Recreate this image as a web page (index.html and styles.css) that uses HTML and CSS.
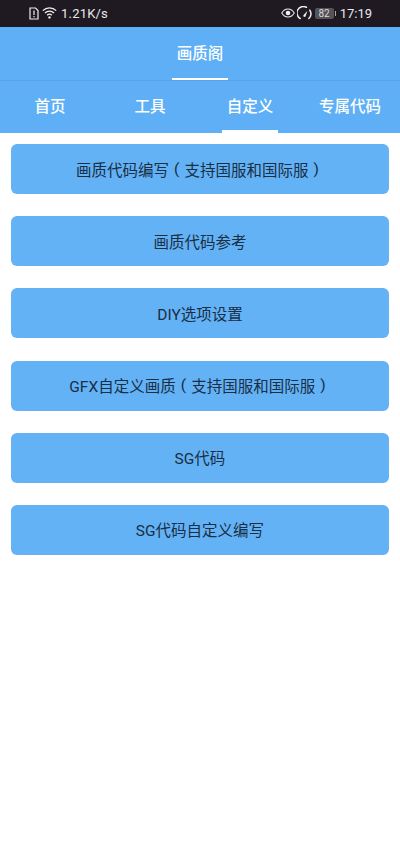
FILE: index.html
```html
<!DOCTYPE html>
<html lang="zh">

<head>
  <meta charset="UTF-8">
  <meta name="viewport" content="width=device-width, initial-scale=1.0">
  <title>画质阁</title>
  <link rel="stylesheet" href="styles.css">
</head>

<body>
  <div class="status-bar">
    <div class="status-left">
      <svg class="sim-icon" width="10" height="13" viewBox="0 0 10 13">
        <path d="M1 1h5.500L9 3.500V12H1z" fill="none" stroke="#eee" stroke-width="1.200" />
        <path d="M4.400 3.500h1.200v4.500H4.400zM4.400 9h1.200v1.300H4.400z" fill="#eee" />
      </svg>
      <svg class="wifi-icon" width="15" height="12" viewBox="0 0 15 12">
        <g fill="none" stroke="#eee" stroke-width="1.300">
          <path d="M.8 3.600a9.500 9.500 0 0 1 13.400 0" />
          <path d="M3 6a6.400 6.400 0 0 1 9 0" />
          <path d="M5.200 8.200a3.200 3.200 0 0 1 4.600 0" />
        </g>
        <circle cx="7.500" cy="10.400" r="1.200" fill="#eee" />
      </svg>
      <span class="net-speed">1.21K/s</span>
    </div>
    <div class="status-right">
      <svg class="eye-icon" width="14" height="10" viewBox="0 0 14 10">
        <path d="M.8 5C2.300 2.300 4.400 1 7 1s4.700 1.300 6.200 4C11.700 7.700 9.600 9 7 9S2.300 7.700.8 5z" fill="none" stroke="#eee" stroke-width="1.100" />
        <circle cx="7" cy="5" r="2.300" fill="#eee" />
      </svg>
      <svg class="gauge-icon" width="15" height="14" viewBox="0 0 15 14">
        <path d="M3.200 12.500A6.200 6.200 0 0 1 9.500 1.300M12.800 4.200a6.200 6.200 0 0 1-1 8.300" fill="none" stroke="#eee" stroke-width="1.500" stroke-linecap="round" />
        <path d="M6.400 9.200l4-4.500-1.800 5.500a1.200 1.200 0 0 1-2.200-1z" fill="#eee" />
      </svg>
      <div class="battery">
        <span class="battery-level">82</span>
        <span class="battery-tip"></span>
      </div>
      <span class="clock">17:19</span>
    </div>
  </div>

  <header class="app-header">
    <div class="app-title">画质阁</div>
  </header>

  <nav class="tabs">
    <div class="tab">首页</div>
    <div class="tab">工具</div>
    <div class="tab tab-active">自定义</div>
    <div class="tab">专属代码</div>
  </nav>

  <main class="menu-list">
    <div class="menu-card">画质代码编写<span class="paren">(</span>支持国服和国际服<span class="paren">)</span></div>
    <div class="menu-card">画质代码参考</div>
    <div class="menu-card">DIY选项设置</div>
    <div class="menu-card">GFX自定义画质<span class="paren">(</span>支持国服和国际服<span class="paren">)</span></div>
    <div class="menu-card">SG代码</div>
    <div class="menu-card">SG代码自定义编写</div>
  </main>
</body>

</html>
```

FILE: styles.css
```css
* {
  box-sizing: border-box;
}

body {
  margin: 0;
  background: #fff;
  font-family: Roboto, "Noto Sans CJK SC", sans-serif;
  min-height: 866px;
}

/* Statusleiste */
.status-bar {
  height: 27px;
  background: #1f1a22;
  color: #e8e8e8;
  display: flex;
  justify-content: space-between;
  align-items: center;
  padding: 0 28px 1px 29px;
  font-size: 13px;
}

.status-left,
.status-right {
  display: flex;
  align-items: center;
}

.wifi-icon {
  margin-left: 3px;
}

.net-speed {
  margin-left: 4px;
  letter-spacing: 0.2px;
}

.gauge-icon {
  margin-left: 2px;
}

.battery {
  display: flex;
  align-items: center;
  margin-left: 3px;
}

.battery-level {
  width: 19px;
  height: 11px;
  border-radius: 2px;
  background: #55525a;
  color: #d8d8d8;
  font-size: 10px;
  line-height: 11px;
  text-align: center;
}

.battery-tip {
  width: 1px;
  height: 5px;
  background: #aaa;
  margin-left: 1px;
}

.clock {
  margin-left: 4px;
  font-size: 13px;
}

/* Kopf und Tabs */
.app-header {
  height: 54px;
  background: #5eaff5;
  display: flex;
  justify-content: center;
  border-bottom: 1px solid #58a6e8;
}

.app-title {
  width: 56px;
  height: 53px;
  padding-top: 1px;
  line-height: 52px;
  text-align: center;
  color: #fff;
  font-size: 15.5px;
  font-weight: 500;
  border-bottom: 2px solid #fff;
}

.tabs {
  display: flex;
  height: 52px;
  background: #5eaff5;
}

.tab {
  flex: 1;
  display: flex;
  justify-content: center;
  align-items: center;
  padding-bottom: 5px;
  position: relative;
  color: #fff;
  font-size: 15.5px;
  font-weight: 500;
}

.tab-active::after {
  content: "";
  position: absolute;
  left: 22px;
  right: 22px;
  bottom: 0;
  height: 3px;
  background: #fff;
}

/* Karten */
.menu-list {
  display: flex;
  flex-direction: column;
  gap: 22.2px;
  padding: 11px 11px 0;
}

.menu-card {
  height: 50px;
  display: flex;
  justify-content: center;
  align-items: center;
  padding-bottom: 1px;
  background: #63b2f6;
  border-radius: 6px;
  color: #1a2e44;
  font-size: 15.5px;
}

.paren {
  width: 1em;
  text-align: center;
}
```
